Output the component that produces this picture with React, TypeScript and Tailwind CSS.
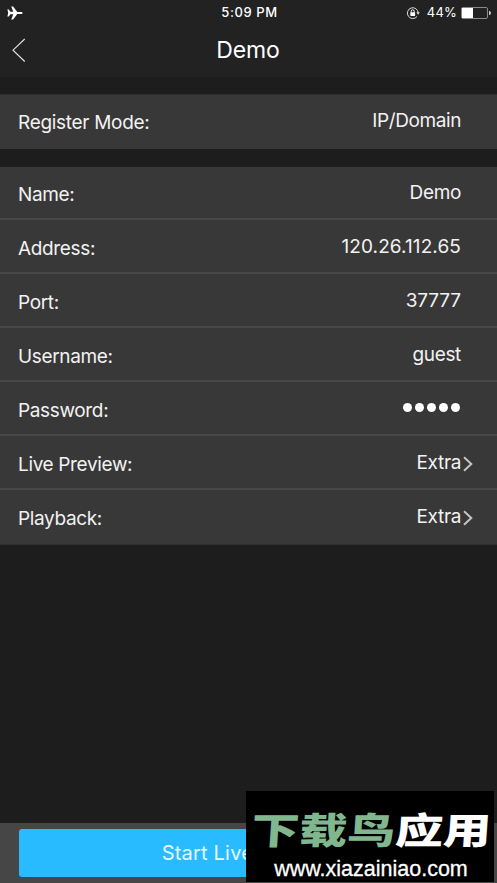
function StatusBar() {
  return (
    <div className="grid h-[25px] grid-cols-3 items-center pl-[7px] pr-[6px] text-[13px]">
      <svg className="h-[14px] w-[16px]" viewBox="0 0 16 14" fill="#fff">
        <path d="M0.4 3.6h1.5l1.4 2.2h3L4.2 0.5h1.9l4.2 5.4h3.5c1 0 1.8.4 1.8 1.1s-.8 1.1-1.8 1.1h-3.5L6.1 13.5H4.2l2.1-5.3h-3L1.9 10.4H.4L1.2 7z" />
      </svg>
      <div className="pl-[1px] text-center font-medium tracking-[0.6px] whitespace-nowrap">5:09 PM</div>
      <div className="flex items-center justify-end">
        {/* Rotation lock */}
        <svg className="mr-[7px] h-[14px] w-[14px]" viewBox="0 0 14 14" fill="none">
          <path d="M11.1 10.4A5.4 5.4 0 1 1 12.2 7" stroke="#ddd" strokeWidth="1" />
          <path d="M10.4 6.2h3.4L12.1 8.8z" fill="#ddd" />
          <path d="M5.2 6.5V5.3a1.5 1.5 0 0 1 3 0v1.2" stroke="#fff" strokeWidth="1" />
          <rect x="4.3" y="6.3" width="4.8" height="3.6" rx="0.4" fill="#fff" />
        </svg>
        <span className="mr-[4px] tracking-[0.2px]">44%</span>
        <div className="flex h-[12px] w-[27px] rounded-[2px] border border-[#8a8a8a]">
          <div className="w-[11px] bg-white" />
        </div>
        <div className="ml-px h-[4px] w-[2px] rounded-r-full bg-[#ccc]" />
      </div>
    </div>
  );
}

const fields = [
  { label: "Name:", value: "Demo" },
  { label: "Address:", value: "120.26.112.65", spacing: "tracking-[0.1px]" },
  { label: "Port:", value: "37777", spacing: "tracking-[-0.1px]" },
  { label: "Username:", value: "guest" },
  { label: "Password:", value: "guest", secret: true },
  { label: "Live Preview:", value: "Extra", more: true },
  { label: "Playback:", value: "Extra", more: true },
];

function Chevron() {
  return (
    <svg className="ml-[2px] mt-px h-[16px] w-[10px]" viewBox="0 0 10 16" fill="none">
      <path d="M1 1.2 8.3 8 1 14.8" stroke="#c4c4c4" strokeWidth="2" />
    </svg>
  );
}

export default function App() {
  return (
    <div className="relative flex h-[883px] w-[497px] flex-col overflow-hidden bg-[#1d1d1d] font-['Inter',sans-serif] text-[#f2f2f2]">
      {/* Header */}
      <header className="h-[77px] bg-[#222222] text-white">
        <StatusBar />
        <div className="grid h-[50px] grid-cols-[60px_1fr_60px] items-center">
          <svg className="ml-[11px] h-[24px] w-[15px]" viewBox="0 0 15 24" fill="none">
            <path d="M13.7 1 2 12.2 13.7 23.5" stroke="#e6e6e6" strokeWidth="1.1" />
          </svg>
          <h1 className="pr-[1px] text-center text-[23px] tracking-[-0.1px]">Demo</h1>
        </div>
      </header>

      {/* Register mode */}
      <div className="mt-[17px] flex h-[55px] items-center justify-between border-t border-[#2e2e2e] bg-[#383838] pl-[18px] pr-[36px] text-[19px] tracking-[-0.3px]">
        <span className="mt-[2px]">Register Mode:</span>
        <span className="-mt-[2px] tracking-[-0.4px]">IP/Domain</span>
      </div>

      {/* Device settings */}
      <div className="mt-[18px] text-[19px] leading-[28px] tracking-[-0.35px]">
        {fields.map((field) => (
          <div
            key={field.label}
            className={`flex h-[54px] items-start justify-between border-b-2 border-[#484848] bg-[#383838] pt-px pl-[18px] first:h-[53px] first:pt-0 last:h-[55px] last:border-b last:border-[#303030] ${field.more ? "pr-[24px]" : "pr-[36px]"}`}
          >
            <span className="mt-[14px]">{field.label}</span>
            {field.secret ? (
              <div className="mt-[20px] mr-[1px] flex gap-[3px]">
                {field.value.split("").map((_, i) => (
                  <i key={i} className="h-[9px] w-[9px] rounded-full bg-white" />
                ))}
              </div>
            ) : (
              <div className={`mt-[12px] flex items-center ${field.spacing ?? ""}`}>
                {field.value}
                {field.more && <Chevron />}
              </div>
            )}
          </div>
        ))}
      </div>

      {/* Bottom bar */}
      <div className="mt-auto h-[60px] bg-[#464646] px-[19px] pt-[6px]">
        <button className="h-[48px] w-full rounded-[3px] bg-[#29bbff] text-[20px] tracking-[0.2px] text-[#e4f8ff]">
          Start Live Preview
        </button>
      </div>

      {/* Site badge */}
      <div className="absolute right-[3px] bottom-px flex h-[91px] w-[248px] flex-col items-center overflow-hidden bg-black">
        <div className="mt-[17px] ml-[2px] h-[40px] -skew-x-3 scale-x-[1.02] scale-y-[0.78] whitespace-nowrap font-['Noto_Sans_CJK_SC',sans-serif] text-[47px] leading-[40px] font-black text-white">
          <span className="text-[#80b78f]">下载鸟</span>应用
        </div>
        <div className="mt-[9px] ml-[2px] font-['Liberation_Sans',sans-serif] text-[21.5px] leading-[24px] text-white [-webkit-text-stroke:0.3px_white]">
          www.xiazainiao.com
        </div>
      </div>
    </div>
  );
}
